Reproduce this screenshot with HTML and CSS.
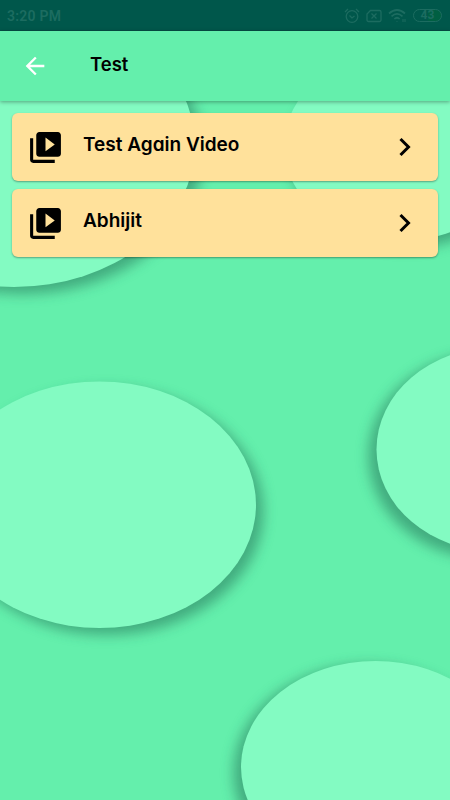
FILE: index.html
```html
<!DOCTYPE html>
<html lang="en">
<head>
  <meta charset="UTF-8" />
  <meta name="viewport" content="width=device-width, initial-scale=1.0"/>
  <title>Test</title>
  <link rel="stylesheet" href="styles.css">
</head>
<body>
  <svg class="backdrop" viewBox="0 0 450 800" aria-hidden="true">
    <defs>
      <filter id="blur" x="-20%" y="-20%" width="140%" height="140%">
        <feGaussianBlur stdDeviation="6.5"/>
      </filter>
    </defs>
    <g class="shade" filter="url(#blur)">
      <ellipse cx="22" cy="152" rx="181" ry="142"/>
      <ellipse cx="407" cy="153" rx="117" ry="95"/>
      <ellipse cx="107" cy="511.5" rx="156.5" ry="123.3"/>
      <ellipse cx="488" cy="456" rx="119.5" ry="103"/>
      <ellipse cx="368" cy="773" rx="134.5" ry="108"/>
    </g>
    <g class="blob">
      <ellipse cx="14" cy="145" rx="181" ry="142"/>
      <ellipse cx="401" cy="146" rx="117" ry="95"/>
      <ellipse cx="99.5" cy="504.7" rx="156.5" ry="123.3"/>
      <ellipse cx="496" cy="449.5" rx="119.5" ry="102"/>
      <ellipse cx="375.5" cy="767" rx="134.5" ry="106"/>
    </g>
  </svg>

  <div class="status-bar">
    <span class="time">3:20 PM</span>
    <div class="status-icons">
      <svg class="line" width="16" height="16" viewBox="0 0 16 16"><circle cx="8" cy="8.5" r="5.8"/><path d="M5.5 7.5L8 10l2.5-2M1 4l3-3M15 4l-3-3"/></svg>
      <svg class="line" width="16" height="14" viewBox="0 0 16 14"><path d="M4.5 1.5h9a1.5 1.5 0 0 1 1.5 1.5v8a1.5 1.5 0 0 1-1.5 1.5h-11A1.5 1.5 0 0 1 1 11V5z"/><path d="M5.5 4.5l5 5M10.5 4.5l-5 5"/></svg>
      <svg class="line wifi" width="19" height="15" viewBox="0 0 19 15"><path d="M1 5.5q8-7 16 0M3.5 8.3q5.5-4.8 11 0M6.3 11q2.7-2.5 5.4 0M9 13v.5"/><path class="traffic" d="M15 11v3M17 11v3"/></svg>
      <span class="battery">43</span>
    </div>
  </div>

  <header class="app-bar">
    <svg class="back" width="28" height="28" viewBox="0 0 24 24"><path d="M20 11H7.83l5.59-5.59L12 4l-8 8 8 8 1.41-1.41L7.83 13H20v-2z"/></svg>
    <h1>Test</h1>
  </header>

  <main class="list">
    <div class="card">
      <svg class="video" width="37" height="37" viewBox="0 0 24 24"><path d="M4 6H2v14c0 1.1.9 2 2 2h14v-2H4V6zm16-4H8c-1.1 0-2 .9-2 2v12c0 1.1.9 2 2 2h12c1.1 0 2-.9 2-2V4c0-1.1-.9-2-2-2zm-8 12.5v-9l6 4.5-6 4.5z"/></svg>
      <span class="title">Test Again Video</span>
      <svg class="chevron" width="12" height="20" viewBox="0 0 12 20"><path d="M1.5 2L9.5 10l-8 8"/></svg>
    </div>
    <div class="card">
      <svg class="video" width="37" height="37" viewBox="0 0 24 24"><path d="M4 6H2v14c0 1.1.9 2 2 2h14v-2H4V6zm16-4H8c-1.1 0-2 .9-2 2v12c0 1.1.9 2 2 2h12c1.1 0 2-.9 2-2V4c0-1.1-.9-2-2-2zm-8 12.5v-9l6 4.5-6 4.5z"/></svg>
      <span class="title">Abhijit</span>
      <svg class="chevron" width="12" height="20" viewBox="0 0 12 20"><path d="M1.5 2L9.5 10l-8 8"/></svg>
    </div>
  </main>
</body>
</html>
```
FILE: styles.css
```css
:root {
  --green: #64efac;
  --blob: #83fbc2;
  --card-bg: #ffe19b;
  --status-bg: #00574b;
  --status-fg: #1c6c60;
}

body {
  margin: 0;
  height: 800px;
  overflow: hidden;
  background-color: var(--green);
  color: #000;
  font-family: Inter, sans-serif;
  font-feature-settings: "cv11";
}

svg {
  display: block;
}

.backdrop {
  position: absolute;
  top: 0;
  left: 0;
  width: 450px;
  height: 800px;
  z-index: -1;
}

.shade {
  fill: #2c7f60;
  opacity: 0.6;
}

.blob {
  fill: var(--blob);
}

.status-bar {
  display: flex;
  align-items: center;
  justify-content: space-between;
  box-sizing: border-box;
  height: 31px;
  padding: 1px 8px 0 7px;
  background: var(--status-bg);
  border-bottom: 1px solid #064e45;
  color: var(--status-fg);
  font-family: Roboto, sans-serif;
}

.time {
  font-size: 14px;
  font-weight: 600;
  letter-spacing: 0.25px;
}

.status-icons {
  display: flex;
  align-items: center;
  gap: 6px;
}

.line {
  fill: none;
  stroke: var(--status-fg);
  stroke-width: 1.3;
}

.wifi {
  stroke-width: 1.7;
}

.traffic {
  stroke-width: 1;
}

.battery {
  box-sizing: border-box;
  width: 29px;
  height: 13px;
  border: 1px solid var(--status-fg);
  border-radius: 7px;
  background: linear-gradient(90deg, transparent 50%, #005f42 50%);
  font-size: 12px;
  font-weight: 700;
  line-height: 11px;
  text-align: center;
}

.app-bar {
  display: flex;
  align-items: center;
  height: 70px;
  padding-left: 21px;
  background: var(--green);
  box-shadow: 0 1px 4px rgba(0, 0, 0, 0.35);
}

.back {
  fill: #fff;
}

h1 {
  margin: 0 0 5px 41px;
  font-size: 18.5px;
  font-weight: 600;
}

.list {
  display: flex;
  flex-direction: column;
  gap: 8px;
  padding: 12px;
}

.card {
  display: flex;
  align-items: center;
  box-sizing: border-box;
  height: 68px;
  padding: 0 27px 0 15px;
  border-radius: 6px;
  background: var(--card-bg);
  box-shadow: 0 1px 2px rgba(0, 0, 0, 0.35);
}

.title {
  flex: 1;
  margin: 0 0 5px 19px;
  font-size: 19px;
  font-weight: 600;
}

.chevron {
  fill: none;
  stroke: #000;
  stroke-width: 3;
}
```
